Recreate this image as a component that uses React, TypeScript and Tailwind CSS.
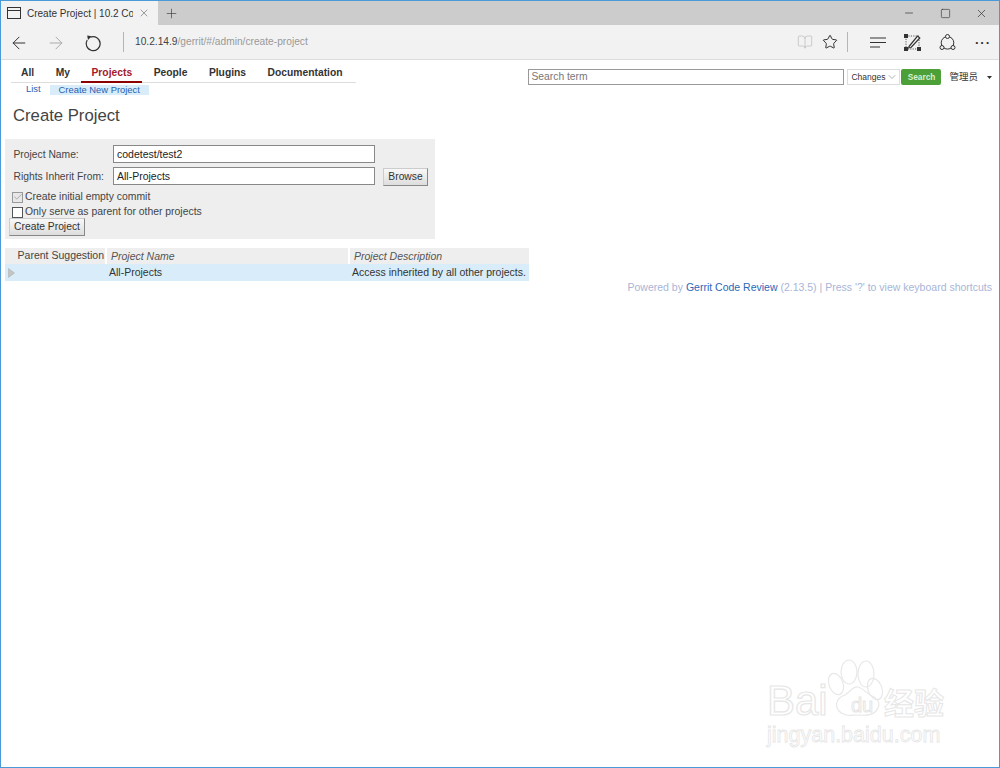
import { Minus, Square, X, Plus, ArrowLeft, ArrowRight, BookOpen, Star, Check, ChevronDown } from 'lucide-react'

const tabs = ['All', 'My', 'Projects', 'People', 'Plugins', 'Documentation']

function NavTabs() {
  return (
    <div className="flex h-[22px] w-[345px] border-b border-[#dddddd] pl-[10px]">
      {tabs.map((tab) => (
        <div
          key={tab}
          className={
            tab === 'Projects'
              ? 'mr-[11.5px] -ml-[10px] h-[22px] border-b-2 border-[#8b0000] px-[10px] pt-[5px] text-[10.3px] leading-[13px] font-bold text-[#a31a2e]'
              : 'mr-[21.5px] pt-[5px] text-[10.3px] leading-[13px] font-bold text-[#333333]'
          }
        >
          {tab}
        </div>
      ))}
    </div>
  )
}

function GrayButton({ label, className }: { label: string; className: string }) {
  return (
    <button className={`flex items-center justify-center border border-[#cccccc] border-r-[#888888] border-b-[#888888] bg-gradient-to-b from-[#f8f8f8] to-[#dddddd] text-[10.3px] text-[#333333] ${className}`}>
      {label}
    </button>
  )
}

function Watermark() {
  return (
    <div className="absolute top-[650px] left-[766px] w-[190px] select-none">
      <svg width="60" height="70" viewBox="0 0 60 70" className="absolute top-[0px] left-[58px]" fill="none" stroke="#e8e8e8" strokeWidth="1.2">
        <ellipse cx="11" cy="33" rx="7" ry="11" transform="rotate(-20 11 33)" />
        <ellipse cx="24" cy="21" rx="8" ry="12" />
        <ellipse cx="41" cy="23" rx="8" ry="13" />
        <ellipse cx="50" cy="38" rx="7" ry="11" transform="rotate(-20 50 38)" />
        <path d="M14 60C8 52 14 46 20 44C26 40 28 35 33 36C38 37 41 42 47 45C54 48 56 54 51 60C46 66 36 64 32 64C27 64 19 66 14 60Z" />
      </svg>
      <div className="mt-[32px] flex h-[36px] items-center">
        <span className="flex h-[36px] w-[62px] items-center font-['Liberation_Sans',sans-serif] text-[42px] leading-[36px] text-transparent [-webkit-text-stroke:1.2px_#e6e6e6]">Bai</span>
        <span className="ml-[11px] flex h-[36px] w-[44px] items-center justify-center pt-[8px] font-['Liberation_Sans',sans-serif] text-[20px] leading-[20px] text-transparent [-webkit-text-stroke:1px_#e6e6e6]">du</span>
        <span className="font-['Noto_Sans_CJK_SC',sans-serif] text-[30px] leading-[36px] font-bold whitespace-nowrap text-transparent [-webkit-text-stroke:1px_#e6e6e6]">经验</span>
      </div>
      <div className="mt-[5px] font-['Liberation_Sans',sans-serif] text-[21.5px] leading-[22px] whitespace-nowrap text-transparent [-webkit-text-stroke:0.8px_#e6e6e6]">
        jingyan.baidu.com
      </div>
    </div>
  )
}

export default function App() {
  return (
    <div className="relative flex h-[768px] w-[1000px] flex-col overflow-hidden border border-[#4a9ad8] bg-white font-['Liberation_Sans','Noto_Sans_CJK_SC',sans-serif] text-[#333333]">
      {/* title bar */}
      <div className="flex h-[24px] items-stretch bg-[#cccccc]">
        <div className="flex w-[157px] items-center bg-[#f2f2f2] pl-[6px]">
          <svg width="14" height="12" viewBox="0 0 14 12" fill="none" stroke="#333333" strokeWidth="1">
            <rect x="0.5" y="0.5" width="13" height="11" />
            <path d="M0.5 3.5H13.5" />
          </svg>
          <span className="ml-[6px] w-[106px] overflow-hidden pt-[1px] text-[10px] whitespace-nowrap text-[#333333]">Create Project | 10.2 Co</span>
          <X size={12} strokeWidth={1} className="ml-[5px] shrink-0 text-[#444444]" />
        </div>
        <div className="flex w-[26px] items-center justify-center">
          <Plus size={15} strokeWidth={1} className="text-[#333333]" />
        </div>
        <div className="flex-1" />
        <div className="flex w-[36px] items-center justify-center">
          <Minus size={12} strokeWidth={1.4} className="text-[#333333]" />
        </div>
        <div className="flex w-[36px] items-center justify-center">
          <Square size={11} strokeWidth={1.4} className="text-[#333333]" />
        </div>
        <div className="flex w-[36px] items-center justify-center">
          <X size={13} strokeWidth={1.3} className="text-[#333333]" />
        </div>
      </div>

      {/* address bar */}
      <div className="flex h-[35px] items-center border-b border-[#dcdcdc] bg-[#f2f2f2]">
        <ArrowLeft size={20} strokeWidth={1.2} className="mt-[2px] ml-[8px] text-[#333333]" />
        <ArrowRight size={20} strokeWidth={1.2} className="mt-[2px] ml-[17px] text-[#aaaaaa]" />
        <svg width="18" height="18" viewBox="0 0 18 18" className="mt-[1px] ml-[18px]" fill="none" stroke="#333333" strokeWidth="1.2">
          <path d="M6.5 3.2A7 7 0 1 1 3.2 6" />
          <path d="M3.2 1.6L7.6 2.2L4 6Z" fill="#333333" stroke="none" />
        </svg>
        <div className="ml-[21px] h-[20px] w-px bg-[#b5b5b5]" />
        <div className="mb-[1px] ml-[11px] text-[10.2px] whitespace-nowrap">
          <span className="text-[#444444]">10.2.14.9</span>
          <span className="text-[#999999]">/gerrit/#/admin/create-project</span>
        </div>
        <div className="flex-1" />
        <BookOpen size={16} strokeWidth={1} className="text-[#b8b8b8]" />
        <Star size={16} strokeWidth={1.4} className="ml-[9px] text-[#222222]" />
        <div className="ml-[9px] h-[20px] w-px bg-[#b5b5b5]" />
        <svg width="17" height="11" viewBox="0 0 17 11" className="ml-[22px]" fill="none" stroke="#333333" strokeWidth="1.1">
          <path d="M0 1H16M0 5.5H16M0 10H10" />
        </svg>
        <svg width="17" height="17" viewBox="0 0 17 17" className="ml-[17px]" fill="none" stroke="#333333" strokeWidth="1">
          <rect x="2" y="2" width="13" height="13" strokeDasharray="1.2 1.2" strokeWidth="0.8" />
          <rect x="0.5" y="0.5" width="3" height="3" fill="#333333" />
          <rect x="13.5" y="13.5" width="3" height="3" fill="#333333" />
          <rect x="0.5" y="13.5" width="3" height="3" fill="#333333" />
          <path d="M5 12.5L13.5 2L15.8 4L7 13.5L4.8 13.8Z" fill="#f2f2f2" strokeWidth="1.2" />
        </svg>
        <svg width="17" height="17" viewBox="0 0 17 17" className="ml-[18px]" fill="none" stroke="#333333" strokeWidth="1">
          <circle cx="8.5" cy="8.8" r="6.3" />
          <circle cx="8.5" cy="2.5" r="2" fill="#f2f2f2" />
          <circle cx="3" cy="13.5" r="2" fill="#f2f2f2" />
          <circle cx="14" cy="13.5" r="2" fill="#f2f2f2" />
        </svg>
        <div className="mr-[8px] ml-[19px] text-[13px] leading-none font-bold tracking-[1px] text-[#333333]">···</div>
      </div>

      {/* gerrit header */}
      <div className="flex items-start justify-between pt-[1px] pl-[10px]">
        <div>
          <NavTabs />
          <div className="flex h-[13px] items-center pl-[7px] text-[9.4px] text-[#2a5db0]">
            <span className="px-[8px]">List</span>
            <span className="ml-[1px] bg-[#d8edf9] px-[9px] leading-[10px]">Create New Project</span>
          </div>
        </div>
        <div className="flex items-center pt-[8px]">
          <div className="flex h-[16px] w-[316px] items-center border border-[#999999] bg-white pl-[2px] text-[10.3px] text-[#777777]">Search term</div>
          <div className="ml-[3px] flex h-[16px] w-[53px] items-center justify-between border border-[#dddddd] bg-white pr-[2px] pl-[3px] text-[8.5px] text-[#333333]">
            Changes
            <ChevronDown size={12} strokeWidth={1} className="shrink-0 text-[#666666]" />
          </div>
          <div className="ml-[1px] flex h-[16px] w-[40px] items-center justify-center rounded-[2px] bg-[#4d9f38] text-[8.3px] font-bold text-[#d9f0d0]">Search</div>
          <div className="ml-[8px] text-[9.5px] text-[#333333]">管理员</div>
          <svg width="5" height="3" viewBox="0 0 5 3" className="mr-[7.5px] ml-[8.5px]">
            <path d="M0 0H5L2.5 3Z" fill="#333333" />
          </svg>
        </div>
      </div>

      {/* page body */}
      <div className="pl-[4px]">
        <h1 className="mt-[8px] ml-[8px] text-[16.7px] leading-[24px] text-[#444444]">Create Project</h1>

        <div className="mt-[11px] w-[430px] bg-[#eeeeee] pt-[6px] pb-[3px] pl-[4px]">
          <div className="flex h-[18px] items-center">
            <span className="w-[104px] pt-[1px] pl-[4.5px] text-[10.3px] text-[#444444]">Project Name:</span>
            <div className="flex h-[18px] w-[262px] items-center border border-[#888888] bg-white pt-[1px] pl-[3px] text-[10.5px] text-[#222222]">codetest/test2</div>
          </div>
          <div className="mt-[4px] flex h-[18px] items-center">
            <span className="w-[104px] pt-[1px] pl-[4.5px] text-[10.3px] text-[#444444]">Rights Inherit From:</span>
            <div className="flex h-[18px] w-[262px] items-center border border-[#888888] bg-white pt-[1px] pl-[3px] text-[10.5px] text-[#222222]">All-Projects</div>
            <GrayButton label="Browse" className="mt-[1px] ml-[8px] h-[18px] w-[45px]" />
          </div>
          <div className="mt-[5px] flex h-[14px] items-center pl-[3px]">
            <div className="flex h-[11px] w-[11px] items-center justify-center border border-[#999999] bg-[#e8e8e8]">
              <Check size={10} strokeWidth={1.6} className="shrink-0 text-[#888888]" />
            </div>
            <span className="ml-[2px] text-[10.4px] text-[#444444]">Create initial empty commit</span>
          </div>
          <div className="mt-[1px] flex h-[14px] items-center pl-[3px]">
            <div className="h-[11px] w-[11px] border border-[#555555] bg-white" />
            <span className="ml-[2px] text-[10.4px] text-[#444444]">Only serve as parent for other projects</span>
          </div>
          <GrayButton label="Create Project" className="-mt-[1px] h-[18px] w-[76px]" />
        </div>

        {/* suggestions table */}
        <div className="mt-[9px] w-[524px] text-[10.5px]">
          <div className="flex h-[16px] items-center gap-[2px]">
            <div className="flex h-full w-[100px] items-center justify-end bg-[#eeeeee] pr-[1px] text-[#444444]">Parent Suggestion</div>
            <div className="flex h-full w-[241px] items-center bg-[#eeeeee] pt-[1px] pl-[4px] text-[#555555] italic">Project Name</div>
            <div className="flex h-full flex-1 items-center bg-[#eeeeee] pt-[1px] pl-[4px] text-[#555555] italic">Project Description</div>
          </div>
          <div className="flex h-[17px] items-center gap-[1px] bg-[#d8edf9]">
            <div className="flex h-full w-[101px] items-center pl-[3px]">
              <svg width="7" height="10" viewBox="0 0 7 10"><path d="M0.5 0.5L6.5 5L0.5 9.5Z" fill="#c4c4c4" stroke="#aaaaaa" strokeWidth="0.5" /></svg>
            </div>
            <div className="w-[243px] pl-[2px] text-[#333333]">All-Projects</div>
            <div className="flex-1 pl-[1px] whitespace-nowrap text-[#333333]">Access inherited by all other projects.</div>
          </div>
        </div>

        <div className="pr-[7px] text-right text-[10.5px] leading-[12px] text-[#a9b5d6]">
          Powered by <span className="text-[#2a68b8]">Gerrit Code Review</span> (2.13.5) | Press '?' to view keyboard shortcuts
        </div>
      </div>

      <Watermark />
    </div>
  )
}
